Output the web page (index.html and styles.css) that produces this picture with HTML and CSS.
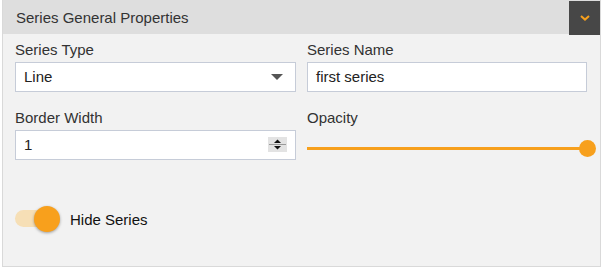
FILE: index.html
```html
<!DOCTYPE html>
<html lang="en">
    <head>
        <meta charset="UTF-8" />
        <meta name="viewport" content="width=device-width, initial-scale=1.0" />
        <title>Series General Properties</title>
        <link rel="stylesheet" href="styles.css">
    </head>
    <body>
        <div class="panel">
            <div class="panel-head">
                <span class="panel-title">Series General Properties</span>
                <div class="collapse-btn">
                    <svg width="10" height="6" viewBox="0 0 10 6">
                        <polyline points="1,1 5,4.6 9,1" fill="none" stroke="#f7a01d" stroke-width="2" />
                    </svg>
                </div>
            </div>

            <div class="panel-body">
                <div class="fields">
                    <div class="field">
                        <label>Series Type</label>
                        <div class="control select">Line<span class="caret"></span></div>
                    </div>
                    <div class="field">
                        <label>Series Name</label>
                        <div class="control">first series</div>
                    </div>
                    <div class="field">
                        <label>Border Width</label>
                        <div class="control number">1
                            <span class="spinner">
                                <svg width="19" height="15" viewBox="0 0 19 15">
                                    <rect width="19" height="15" fill="#e3e3e3" />
                                    <polygon points="6,6 13,6 9.5,2.5" fill="#111" />
                                    <line x1="1" y1="7.5" x2="18" y2="7.5" stroke="#9a9a9a" stroke-width="1" />
                                    <polygon points="6,9 13,9 9.5,12.5" fill="#111" />
                                </svg>
                            </span>
                        </div>
                    </div>
                    <div class="field">
                        <label>Opacity</label>
                        <div class="slider">
                            <span class="slider-track"></span>
                            <span class="slider-thumb"></span>
                        </div>
                    </div>
                </div>

                <div class="toggle-row">
                    <div class="toggle">
                        <span class="toggle-track"></span>
                        <span class="toggle-thumb"></span>
                    </div>
                    <span class="toggle-label">Hide Series</span>
                </div>
            </div>
        </div>
    </body>
</html>
```
FILE: styles.css
```css
* {
    margin: 0;
    padding: 0;
    box-sizing: border-box;
}

body {
    background-color: #fff;
    font-family: "Liberation Sans", Arial, sans-serif;
    font-size: 15px;
}

.panel {
    width: 599px;
    height: 267px;
    margin-left: 2px;
    border: 1px solid #d9d9d9;
    border-top: none;
    background-color: #f2f2f2;
}

/* 标题栏 */
.panel-head {
    height: 34px;
    display: flex;
    justify-content: space-between;
    align-items: center;
    padding-left: 13px;
    background-color: #dedede;
    color: #333;
}

.collapse-btn {
    align-self: flex-start;
    width: 31px;
    height: 34px;
    margin-top: 1px;
    display: flex;
    justify-content: center;
    align-items: center;
    background-color: #474747;
}

.panel-body {
    padding: 7px 12px 0 12px;
}

.fields {
    display: grid;
    grid-template-columns: 281px 280px;
    column-gap: 11px;
    row-gap: 17px;
}

.field label {
    display: block;
    line-height: 17px;
    margin-bottom: 4px;
    color: #333;
}

.control {
    position: relative;
    height: 30px;
    line-height: 28px;
    padding-left: 8px;
    border: 1px solid #c6ccd8;
    background-color: #fff;
    color: #222;
}

.caret {
    position: absolute;
    top: 11px;
    right: 12px;
    width: 0;
    height: 0;
    border-left: 6px solid transparent;
    border-right: 6px solid transparent;
    border-top: 6px solid #555;
}

.spinner {
    position: absolute;
    top: 6px;
    right: 8px;
    width: 19px;
    height: 15px;
    display: flex;
}

/* 滑块 */
.slider {
    position: relative;
    height: 17px;
    margin-top: 14px;
}

.slider-track {
    position: absolute;
    top: 7px;
    left: 0;
    right: 0;
    height: 3px;
    background-color: #f7a01d;
}

.slider-thumb {
    position: absolute;
    top: 0;
    right: -9px;
    width: 17px;
    height: 17px;
    border-radius: 50%;
    background-color: #f7a01d;
}

/* 开关 */
.toggle-row {
    display: flex;
    align-items: center;
    margin-top: 46px;
}

.toggle {
    position: relative;
    width: 45px;
    height: 26px;
}

.toggle-track {
    position: absolute;
    top: 4px;
    left: 0;
    width: 42px;
    height: 17px;
    border-radius: 9px;
    background-color: #f6dfb6;
}

.toggle-thumb {
    position: absolute;
    top: 0;
    left: 19px;
    width: 26px;
    height: 26px;
    border-radius: 50%;
    background-color: #f8a01c;
    box-shadow: 0 1px 3px rgba(0, 0, 0, 0.35);
}

.toggle-label {
    margin-left: 10px;
    color: #111;
}
```
